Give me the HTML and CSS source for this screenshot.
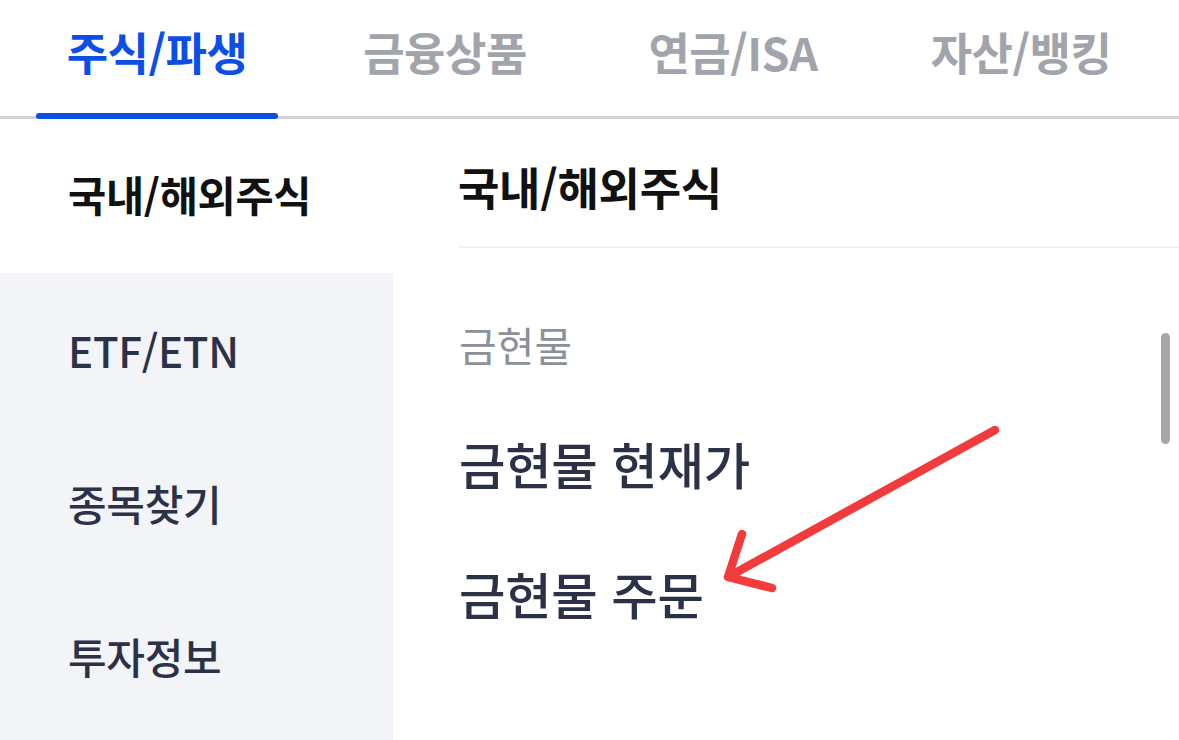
FILE: index.html
```html
<!DOCTYPE html>
<html lang="ko">
<head>
<meta charset="utf-8">
<title>메뉴</title>
<link rel="stylesheet" href="styles.css">
</head>
<body>
<div class="page">
  <nav class="tabs">
    <div class="tab active"><span class="tab-label">주식/파생</span></div>
    <div class="tab"><span class="tab-label">금융상품</span></div>
    <div class="tab"><span class="tab-label">연금/ISA</span></div>
    <div class="tab"><span class="tab-label">자산/뱅킹</span></div>
  </nav>
  <div class="body">
    <aside class="side">
      <div class="side-item selected">국내/해외주식</div>
      <div class="side-item">ETF/ETN</div>
      <div class="side-item">종목찾기</div>
      <div class="side-item">투자정보</div>
    </aside>
    <main class="content">
      <h2 class="content-title">국내/해외주식</h2>
      <div class="group-label">금현물</div>
      <div class="menu-item">금현물 현재가</div>
      <div class="menu-item">금현물 주문</div>
      <div class="scrollbar"></div>
    </main>
  </div>
  <svg class="arrow" width="1179" height="740" viewBox="0 0 1179 740">
    <path d="M995 430 L728 577 M742 534 L728 577 L772 588" fill="none" stroke="#f23b3b" stroke-width="8.5" stroke-linecap="round" stroke-linejoin="round"/>
  </svg>
</div>
</body>
</html>
```

FILE: styles.css
```css
* { box-sizing: border-box; }
html, body { margin: 0; padding: 0; background: #ffffff; }
body {
  font-family: "Noto Sans CJK KR", "Noto Sans", sans-serif;
  width: 1179px;
  height: 740px;
  overflow: hidden;
}
.page { position: relative; width: 1179px; height: 740px; }

.tabs {
  display: grid;
  grid-template-columns: repeat(4, 288px);
  padding-left: 13px;
  height: 119px;
  border-bottom: 3px solid #cfd2d6;
}
.tab {
  display: flex;
  justify-content: center;
  align-items: flex-start;
  padding-top: 20px;
}
.tab-label {
  position: relative;
  display: block;
  font-size: 45px;
  font-weight: 700;
  line-height: 64px;
  color: #a1a5ab;
  letter-spacing: -0.5px;
  padding: 0 31px;
  height: 96px;
}
.tab.active .tab-label { color: #0b4fe6; }
.tab.active .tab-label::after {
  content: "";
  position: absolute;
  left: 0;
  right: 0;
  bottom: -3px;
  height: 6px;
  border-radius: 3px;
  background: #0b4fe6;
}

.body {
  display: flex;
  height: 621px;
}
.side {
  width: 393px;
  background: #f2f4f8;
  flex-shrink: 0;
}
.side-item {
  height: 153px;
  display: flex;
  align-items: center;
  padding-left: 68px;
  font-size: 42px;
  font-weight: 500;
  color: #2b3247;
  letter-spacing: -0.3px;
}
.side-item.selected {
  height: 154px;
  background: #ffffff;
  color: #111111;
  font-size: 41.5px;
  font-weight: 700;
  padding-bottom: 4px;
}

.content {
  position: relative;
  flex: 1;
  padding-left: 65px;
}
.content-title {
  margin: 0;
  height: 129px;
  padding-top: 8px;
  display: flex;
  align-items: center;
  font-size: 45px;
  font-weight: 700;
  color: #111111;
  letter-spacing: -0.3px;
  border-bottom: 2px solid #f1f2f4;
}
.group-label {
  margin-top: 70px;
  line-height: 52px;
  font-size: 41px;
  color: #8c9199;
  padding-left: 1px;
}
.menu-item {
  height: 130px;
  display: flex;
  align-items: center;
  font-size: 50.5px;
  font-weight: 500;
  color: #2b3247;
  padding-left: 1px;
  letter-spacing: -0.3px;
}
.group-label + .menu-item { margin-top: 28px; }

.scrollbar {
  position: absolute;
  left: 768px;
  top: 214px;
  width: 9px;
  height: 111px;
  border-radius: 5px;
  background: #a8a8a8;
}

.arrow {
  position: absolute;
  left: 0;
  top: 0;
  pointer-events: none;
}
```
